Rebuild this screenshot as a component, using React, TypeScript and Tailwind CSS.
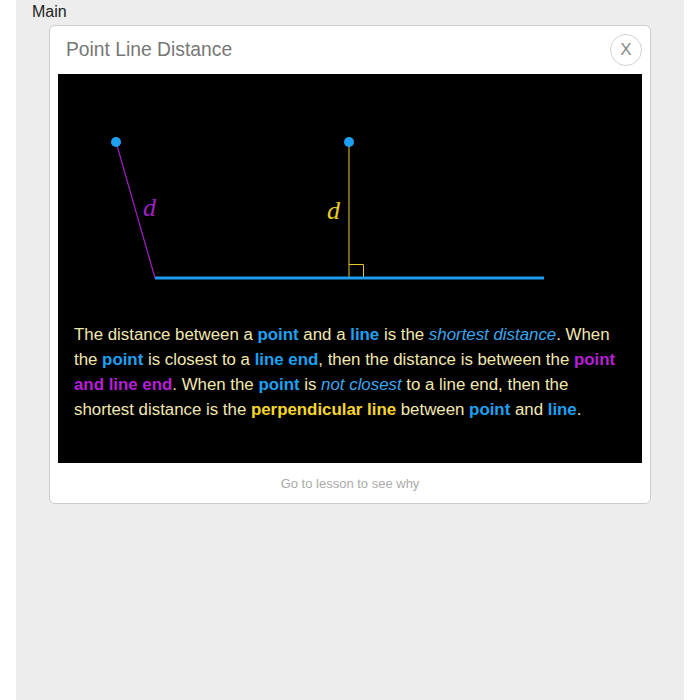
import React from "react";

const B = ({ children }: { children: React.ReactNode }) => (
  <span className="font-bold text-[#1ea0f2]">{children}</span>
);
const P = ({ children }: { children: React.ReactNode }) => (
  <span className="font-bold text-[#b71fd6]">{children}</span>
);
const I = ({ children }: { children: React.ReactNode }) => (
  <span className="italic text-[#3aa6ee]">{children}</span>
);
const Y = ({ children }: { children: React.ReactNode }) => (
  <span className="font-bold text-[#f7d62a]">{children}</span>
);

export default function App() {
  return (
    <div className="min-h-[700px] bg-white font-['Liberation_Sans',Arial,sans-serif]">
      <div className="mx-4 min-h-[700px] bg-[#ededed] pt-[3px]">
        <div className="pl-4 text-[16px] leading-[18px] text-[#222]">Main</div>
        <div className="ml-[33px] mt-[4px] w-[602px] rounded-[6px] border border-[#cccccc] bg-white">
          <div className="flex h-[48px] items-center justify-between pl-4 pr-2">
            <div className="text-[19.3px] text-[#777]">Point Line Distance</div>
            <div className="flex h-[32px] w-[32px] items-center justify-center rounded-full border border-[#d4d4d4] text-[17px] text-[#888]">
              X
            </div>
          </div>
          <div className="mx-2 h-[389px] bg-black">
            <svg width="584" height="248" className="block">
              <line x1="58" y1="68" x2="97" y2="204" stroke="#a11fc4" strokeWidth="1.2" />
              <line x1="291" y1="68" x2="291" y2="204" stroke="#9c8521" strokeWidth="1.5" />
              <path d="M291 190.5 H305.5 V204" fill="none" stroke="#e5c72a" strokeWidth="1" />
              <line x1="97" y1="204" x2="486" y2="204" stroke="#1e9cf0" strokeWidth="3" />
              <circle cx="58" cy="68" r="5" fill="#1ea0f2" />
              <circle cx="291" cy="68" r="5" fill="#1ea0f2" />
              <text x="85" y="142" fill="#a11fc4" fontSize="26" fontStyle="italic" fontFamily="'Liberation Serif', serif">d</text>
              <text x="269" y="145" fill="#e8cd2c" fontSize="26" fontStyle="italic" fontFamily="'Liberation Serif', serif">d</text>
            </svg>
            <p className="px-4 text-[16.85px] leading-[25px] text-[#f3e8b0]">
              The distance between a <B>point</B> and a <B>line</B> is the <I>shortest distance</I>. When the{" "}
              <B>point</B> is closest to a <B>line end</B>, then the distance is between the{" "}
              <P>point and line end</P>. When the <B>point</B> is <I>not closest</I> to a line end, then the
              shortest distance is the <Y>perpendicular line</Y> between <B>point</B> and <B>line</B>.
            </p>
          </div>
          <div className="flex h-[40px] items-center justify-center pt-[1px] text-[13px] text-[#aaa]">
            Go to lesson to see why
          </div>
        </div>
      </div>
    </div>
  );
}
